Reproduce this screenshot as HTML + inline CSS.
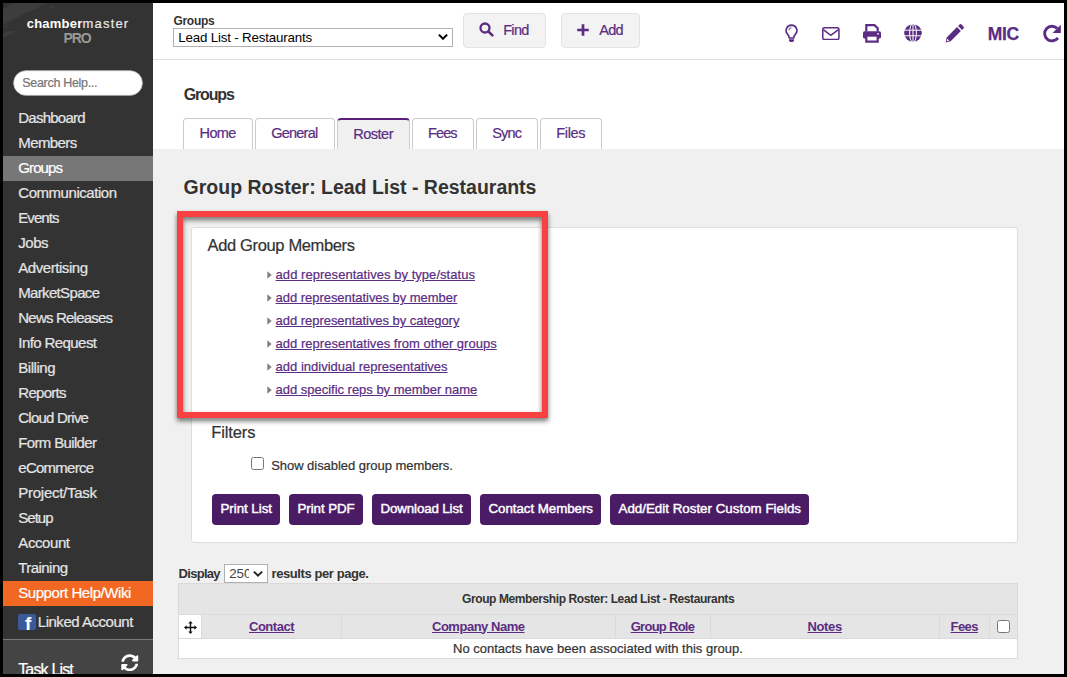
<!DOCTYPE html>
<html lang="en">
<head>
<meta charset="utf-8">
<title>Group Roster: Lead List - Restaurants</title>
<style>

html,body{margin:0;padding:0;}
body{width:1067px;height:677px;overflow:hidden;position:relative;background:#f0f0f0;font-family:"Liberation Sans",Arial,sans-serif;color:#333;}
.abs,.t,svg{position:absolute;}
.t{white-space:pre;margin:0;-webkit-text-stroke:.22px currentColor;}
.t.b{-webkit-text-stroke:0;}
a.t{text-decoration:underline;}
a.t.nu{text-decoration:none;}
#frame{left:0;top:0;width:1067px;height:677px;box-sizing:border-box;border:3px solid #000;z-index:50;}
#side{left:0;top:0;width:153px;height:677px;background:#333;}
#topbar{left:153px;top:0;width:914px;height:59px;background:#fff;border-bottom:1px solid #ddd;}
#white{left:153px;top:60px;width:914px;height:89px;background:#fff;}
.tab{top:118px;height:31px;box-sizing:border-box;background:#fff;border:1px solid #ccc;border-bottom:none;border-radius:4px 4px 0 0;}
.tab.on{background:#f0f0f0;border-top:2px solid #5a1f7c;}
.btn{top:494px;height:31px;background:#4a1c66;border-radius:4px;}
.tbtn{top:13px;height:35px;box-sizing:border-box;background:#f3f3f3;border:1px solid #e3e3e3;border-radius:4px;}
#panel{left:191px;top:227px;width:827px;height:316px;box-sizing:border-box;background:#fff;border:1px solid #ddd;border-radius:3px;}
#hl{left:177px;top:211px;width:371px;height:207px;box-sizing:border-box;border:6px solid #fa4141;filter:drop-shadow(.5px 3px 2.400px rgba(0,0,0,.55));z-index:10;}
.cb{width:13px;height:13px;box-sizing:border-box;border:1px solid #767676;border-radius:2.5px;background:#fff;}
.sel{box-sizing:border-box;border:1px solid #b0b0b0;background:#fff;}

</style>
</head>
<body>
<div id="side" class="abs">
<svg style="left:3px;top:3px" width="110" height="70" viewBox="3 3 110 70"><g fill="#3d3d3d"><polygon points="3,9 13,3 46,3 36,9 24,14 12,20 3,25"/><polygon points="3,33 9,31 14,31 13,33.500 3,37.500"/><polygon points="51,6 53.500,5 54,7.500 52,9.500"/><polygon points="3,26.500 10,24.500 3,28.500"/></g></svg>
<span class="t b" style="left:26.7px;top:16.0px;font-size:13px;line-height:16px;font-weight:700;color:#fff;letter-spacing:0.23px;">chamber</span>
<span class="t" style="left:82.6px;top:16.0px;font-size:13px;line-height:16px;font-weight:400;color:#e8e8e8;letter-spacing:1.17px;">master</span>
<span class="t b" style="left:63.5px;top:29.8px;font-size:14px;line-height:17px;font-weight:700;color:#999;letter-spacing:-1.12px;">PRO</span>
<svg style="left:10px;top:68px" width="136" height="30" viewBox="10 68 136 30"><rect x="13.600" y="70.700" width="128.800" height="24.600" rx="12.300" fill="#fff" stroke="#c0c0c0" stroke-width=".8"/></svg>
<span class="t" style="left:22.3px;top:75.8px;font-size:12.5px;line-height:15px;font-weight:400;color:#757575;letter-spacing:-0.31px;">Search Help...</span>
<a class="t nu" style="left:18.3px;top:108.8px;font-size:15px;line-height:18px;font-weight:400;color:#e4e4e4;letter-spacing:-0.77px;">Dashboard</a>
<a class="t nu" style="left:18.3px;top:133.8px;font-size:15px;line-height:18px;font-weight:400;color:#e4e4e4;letter-spacing:-0.60px;">Members</a>
<div class="abs" style="left:0;top:156px;width:153px;height:25px;background:#777;"></div>
<a class="t nu" style="left:18.3px;top:158.8px;font-size:15px;line-height:18px;font-weight:400;color:#fff;letter-spacing:-0.90px;">Groups</a>
<a class="t nu" style="left:18.3px;top:183.8px;font-size:15px;line-height:18px;font-weight:400;color:#e4e4e4;letter-spacing:-0.46px;">Communication</a>
<a class="t nu" style="left:18.3px;top:208.8px;font-size:15px;line-height:18px;font-weight:400;color:#e4e4e4;letter-spacing:-0.93px;">Events</a>
<a class="t nu" style="left:18.3px;top:233.8px;font-size:15px;line-height:18px;font-weight:400;color:#e4e4e4;letter-spacing:-0.50px;">Jobs</a>
<a class="t nu" style="left:18.3px;top:258.8px;font-size:15px;line-height:18px;font-weight:400;color:#e4e4e4;letter-spacing:-0.45px;">Advertising</a>
<a class="t nu" style="left:18.3px;top:283.8px;font-size:15px;line-height:18px;font-weight:400;color:#e4e4e4;letter-spacing:-0.67px;">MarketSpace</a>
<a class="t nu" style="left:18.3px;top:308.8px;font-size:15px;line-height:18px;font-weight:400;color:#e4e4e4;letter-spacing:-0.79px;">News Releases</a>
<a class="t nu" style="left:18.3px;top:333.8px;font-size:15px;line-height:18px;font-weight:400;color:#e4e4e4;letter-spacing:-0.58px;">Info Request</a>
<a class="t nu" style="left:18.3px;top:358.8px;font-size:15px;line-height:18px;font-weight:400;color:#e4e4e4;letter-spacing:-0.47px;">Billing</a>
<a class="t nu" style="left:18.3px;top:383.8px;font-size:15px;line-height:18px;font-weight:400;color:#e4e4e4;letter-spacing:-0.72px;">Reports</a>
<a class="t nu" style="left:18.3px;top:408.8px;font-size:15px;line-height:18px;font-weight:400;color:#e4e4e4;letter-spacing:-0.77px;">Cloud Drive</a>
<a class="t nu" style="left:18.3px;top:433.8px;font-size:15px;line-height:18px;font-weight:400;color:#e4e4e4;letter-spacing:-0.65px;">Form Builder</a>
<a class="t nu" style="left:18.3px;top:458.8px;font-size:15px;line-height:18px;font-weight:400;color:#e4e4e4;letter-spacing:-0.75px;">eCommerce</a>
<a class="t nu" style="left:18.3px;top:483.8px;font-size:15px;line-height:18px;font-weight:400;color:#e4e4e4;letter-spacing:-0.27px;">Project/Task</a>
<a class="t nu" style="left:18.3px;top:508.8px;font-size:15px;line-height:18px;font-weight:400;color:#e4e4e4;letter-spacing:-1.00px;">Setup</a>
<a class="t nu" style="left:18.3px;top:533.8px;font-size:15px;line-height:18px;font-weight:400;color:#e4e4e4;letter-spacing:-0.42px;">Account</a>
<a class="t nu" style="left:18.3px;top:558.8px;font-size:15px;line-height:18px;font-weight:400;color:#e4e4e4;letter-spacing:-0.56px;">Training</a>
<div class="abs" style="left:0;top:581px;width:153px;height:25px;background:#f26722;"></div>
<a class="t nu" style="left:18.2px;top:583.5px;font-size:15px;line-height:18px;font-weight:400;color:#fff;letter-spacing:-0.43px;">Support Help/Wiki</a>
<div class="abs" style="left:18px;top:614px;width:18px;height:16px;border-radius:2px;background:#3b5998;overflow:hidden;"><span class="abs" style="left:7px;top:.3px;font-size:19px;line-height:19px;font-weight:700;color:#fff;">f</span></div>
<a class="t nu" style="left:37.8px;top:612.8px;font-size:15px;line-height:18px;font-weight:400;color:#e4e4e4;letter-spacing:-0.48px;">Linked Account</a>
<div class="abs" style="left:0;top:639px;width:153px;height:38px;background:#444;border-top:1px solid #7a7a7a;box-sizing:border-box;"></div>
<span class="t" style="left:18.2px;top:660.3px;font-size:16px;line-height:19px;font-weight:400;color:#fff;letter-spacing:-0.83px;">Task List</span>
<svg style="left:121.300px;top:653.800px" width="17.500" height="17.500" viewBox="0 0 512 512"><path fill="#fff" d="M370.7 133.3C339.5 104 298.900 88 255.800 88c-77.500 .1-144.300 53.200-162.800 126.900-1.300 5.400-6.100 9.200-11.700 9.200H24.100c-7.500 0-13.200-6.800-11.800-14.200C33.900 94.900 134.800 8 256 8c66.400 0 126.800 26.100 171.300 68.700L463 41C478.100 25.900 504 36.600 504 57.900V192c0 13.300-10.700 24-24 24H345.900c-21.400 0-32.100-25.900-17-41l41.800-41.700zM32 296h134.100c21.400 0 32.100 25.900 17 41l-41.800 41.800c31.300 29.300 71.800 45.300 114.900 45.300 77.400-.1 144.300-53.100 162.800-126.800 1.300-5.400 6.100-9.200 11.700-9.200h57.300c7.500 0 13.200 6.800 11.800 14.200C478.100 417.100 377.200 504 256 504c-66.400 0-126.800-26.100-171.300-68.700L49 471c-15.100 15.100-41 4.400-41-16.900V320c0-13.300 10.700-24 24-24z"/></svg>
</div>
<div id="topbar" class="abs"></div>
<span class="t b" style="left:173.4px;top:13.5px;font-size:12px;line-height:14px;font-weight:700;color:#333;letter-spacing:-0.27px;">Groups</span>
<div class="abs sel" style="left:173px;top:28px;width:280px;height:19px;"></div>
<span class="t b" style="left:178.2px;top:30.1px;font-size:13.33px;line-height:16px;font-weight:400;color:#000;letter-spacing:-0.17px;">Lead List - Restaurants</span>
<svg style="left:438px;top:33px" width="10" height="8" viewBox="0 0 10 8"><path d="M.9 1.600 5 5.800 9.100 1.600" fill="none" stroke="#000" stroke-width="2"/></svg>
<div class="abs tbtn" style="left:463px;width:83px;"></div>
<svg style="left:478.5px;top:22.300px" width="15" height="15" viewBox="0 0 15 15"><circle cx="6" cy="6" r="4.500" fill="none" stroke="#5b2d82" stroke-width="2.300"/><path d="M9.300 9.300 13.400 13.400" stroke="#5b2d82" stroke-width="2.600" stroke-linecap="round"/></svg>
<span class="t" style="left:503.2px;top:21.7px;font-size:14.5px;line-height:17px;font-weight:400;color:#5b2d82;letter-spacing:-0.67px;">Find</span>
<div class="abs tbtn" style="left:561px;width:79px;"></div>
<svg style="left:577px;top:24px" width="12" height="12" viewBox="0 0 12 12"><path d="M6 .2v11.600M.2 6h11.600" stroke="#5b2d82" stroke-width="2.700"/></svg>
<span class="t" style="left:599.2px;top:21.7px;font-size:14.5px;line-height:17px;font-weight:400;color:#5b2d82;letter-spacing:-0.71px;">Add</span>
<svg style="left:785px;top:23.500px" width="13" height="19" viewBox="0 0 13 19"><path d="M6.500 1.100a5.400 5.400 0 0 0-4 9c.9 1 1.600 2.300 1.800 3.900h4.400c.2-1.600.9-2.900 1.800-3.900a5.400 5.400 0 0 0-4-9z" fill="none" stroke="#5b2d82" stroke-width="1.600"/><path d="M4 15.300h5v1.200l-1 1.600H5l-1-1.600z" fill="#5b2d82"/><path d="M3.900 6.400a2.600 2.600 0 0 1 2.600-2.600" fill="none" stroke="#5b2d82" stroke-width=".9"/></svg>
<svg style="left:821.800px;top:26.600px" width="18" height="13.200" viewBox="0 0 18 13.200"><rect x=".75" y=".75" width="16.200" height="11.700" rx="1.500" fill="none" stroke="#5b2d82" stroke-width="1.500"/><path d="M1.300 2.600 8.850 8.300 16.400 2.600" fill="none" stroke="#5b2d82" stroke-width="1.500"/></svg>
<svg style="left:863px;top:23.500px" width="18" height="19" viewBox="0 0 18 19"><path d="M3.300 7.500V1.200h8.200l3.200 3v3.300" fill="none" stroke="#5b2d82" stroke-width="2.200"/><rect x="0" y="7.300" width="18" height="7.200" rx="1.600" fill="#5b2d82"/><rect x="3.300" y="11.600" width="11.400" height="6" fill="#fff" stroke="#5b2d82" stroke-width="2.200"/><circle cx="15" cy="9.800" r=".9" fill="#fff"/></svg>
<svg style="left:904px;top:24px" width="18" height="18" viewBox="0 0 18 18"><circle cx="9" cy="9" r="8.800" fill="#5b2d82"/><g fill="none" stroke="#fff" stroke-width="1"><ellipse cx="9" cy="9" rx="3.400" ry="9.600"/><path d="M0 6.200h18M0 11.800h18M9 0v18"/></g></svg>
<svg style="left:945px;top:23.500px" width="19" height="19" viewBox="0 0 19 19"><path d="M.6 18.400 1.700 13.400 12 3.100 15.900 7 5.600 17.300z" fill="#5b2d82"/><path d="M13.100 2 14.500 .6a1.500 1.500 0 0 1 2.100 0l1.800 1.800a1.500 1.500 0 0 1 0 2.100L17 5.900z" fill="#5b2d82"/><path d="M2.300 14.800 4.200 16.700 1.700 17.300z" fill="#fff"/></svg>
<span class="t b" style="left:987.8px;top:24.1px;font-size:17.5px;line-height:21px;font-weight:700;color:#5b2d82;letter-spacing:-0.39px;-webkit-text-stroke:.25px #5b2d82;">MIC</span>
<svg style="left:1042px;top:23.500px" width="20" height="19" viewBox="0 0 20 19"><path d="M15.900 13.800a7.300 7.300 0 1 1-.8-9.400" fill="none" stroke="#5b2d82" stroke-width="2.900"/><path d="M18.800 .8v8.200h-8.200z" fill="#5b2d82"/></svg>
<div id="white" class="abs"></div>
<span class="t b" style="left:183.7px;top:84.8px;font-size:16px;line-height:19px;font-weight:700;color:#333;letter-spacing:-1.16px;">Groups</span>
<div class="abs tab" style="left:183px;width:69.5px;"></div>
<a class="t nu" style="left:199.6px;top:124.5px;font-size:14.5px;line-height:17px;font-weight:400;color:#5b2d82;letter-spacing:-0.66px;">Home</a>
<div class="abs tab" style="left:255px;width:80px;"></div>
<a class="t nu" style="left:271.2px;top:124.5px;font-size:14.5px;line-height:17px;font-weight:400;color:#5b2d82;letter-spacing:-0.77px;">General</a>
<div class="abs tab on" style="left:337px;width:73px;"></div>
<a class="t nu" style="left:353.3px;top:125.5px;font-size:14.5px;line-height:17px;font-weight:400;color:#5b2d82;letter-spacing:-0.50px;">Roster</a>
<div class="abs tab" style="left:412px;width:62px;"></div>
<a class="t nu" style="left:428.1px;top:124.5px;font-size:14.5px;line-height:17px;font-weight:400;color:#5b2d82;letter-spacing:-0.92px;">Fees</a>
<div class="abs tab" style="left:476px;width:61.5px;"></div>
<a class="t nu" style="left:492.2px;top:124.5px;font-size:14.5px;line-height:17px;font-weight:400;color:#5b2d82;letter-spacing:-0.82px;">Sync</a>
<div class="abs tab" style="left:540px;width:61.5px;"></div>
<a class="t nu" style="left:556.3px;top:124.5px;font-size:14.5px;line-height:17px;font-weight:400;color:#5b2d82;letter-spacing:-0.36px;">Files</a>
<h1 class="t b" style="left:183.6px;top:176.0px;font-size:19.5px;line-height:23px;font-weight:700;color:#333;letter-spacing:-0.01px;">Group Roster: Lead List - Restaurants</h1>
<div id="panel" class="abs"></div>
<h3 class="t" style="left:207.6px;top:234.9px;font-size:16.5px;line-height:20px;font-weight:400;color:#333;letter-spacing:-0.36px;">Add Group Members</h3>
<svg style="left:266.500px;top:270.8px" width="5" height="8" viewBox="0 0 5 8"><path d="M.3 .3 4.700 4 .3 7.700z" fill="#808080"/></svg>
<a class="t" style="left:275.6px;top:267.1px;font-size:13px;line-height:16px;font-weight:400;color:#5b2d82;letter-spacing:0.04px;">add representatives by type/status</a>
<svg style="left:266.500px;top:293.8px" width="5" height="8" viewBox="0 0 5 8"><path d="M.3 .3 4.700 4 .3 7.700z" fill="#808080"/></svg>
<a class="t" style="left:275.6px;top:290.1px;font-size:13px;line-height:16px;font-weight:400;color:#5b2d82;letter-spacing:-0.04px;">add representatives by member</a>
<svg style="left:266.500px;top:316.8px" width="5" height="8" viewBox="0 0 5 8"><path d="M.3 .3 4.700 4 .3 7.700z" fill="#808080"/></svg>
<a class="t" style="left:275.6px;top:313.1px;font-size:13px;line-height:16px;font-weight:400;color:#5b2d82;letter-spacing:-0.04px;">add representatives by category</a>
<svg style="left:266.500px;top:339.8px" width="5" height="8" viewBox="0 0 5 8"><path d="M.3 .3 4.700 4 .3 7.700z" fill="#808080"/></svg>
<a class="t" style="left:275.6px;top:336.1px;font-size:13px;line-height:16px;font-weight:400;color:#5b2d82;letter-spacing:0.02px;">add representatives from other groups</a>
<svg style="left:266.500px;top:362.8px" width="5" height="8" viewBox="0 0 5 8"><path d="M.3 .3 4.700 4 .3 7.700z" fill="#808080"/></svg>
<a class="t" style="left:275.6px;top:359.1px;font-size:13px;line-height:16px;font-weight:400;color:#5b2d82;">add individual representatives</a>
<svg style="left:266.500px;top:385.8px" width="5" height="8" viewBox="0 0 5 8"><path d="M.3 .3 4.700 4 .3 7.700z" fill="#808080"/></svg>
<a class="t" style="left:275.6px;top:382.1px;font-size:13px;line-height:16px;font-weight:400;color:#5b2d82;letter-spacing:-0.02px;">add specific reps by member name</a>
<h3 class="t" style="left:211.2px;top:422.4px;font-size:16.5px;line-height:20px;font-weight:400;color:#333;letter-spacing:-0.10px;">Filters</h3>
<div class="abs cb" style="left:251px;top:457px;"></div>
<span class="t" style="left:271.2px;top:457.5px;font-size:13px;line-height:16px;font-weight:400;color:#333;letter-spacing:-0.04px;">Show disabled group members.</span>
<div class="abs btn" style="left:212px;width:68px;"></div>
<span class="t" style="left:220.5px;top:501.4px;font-size:13.33px;line-height:16px;font-weight:400;color:#fff;letter-spacing:-0.04px;-webkit-text-stroke:.42px #fff;">Print List</span>
<div class="abs btn" style="left:289px;width:73.69999999999999px;"></div>
<span class="t" style="left:297.5px;top:501.4px;font-size:13.33px;line-height:16px;font-weight:400;color:#fff;letter-spacing:-0.07px;-webkit-text-stroke:.42px #fff;">Print PDF</span>
<div class="abs btn" style="left:372px;width:98.69999999999999px;"></div>
<span class="t" style="left:380.5px;top:501.4px;font-size:13.33px;line-height:16px;font-weight:400;color:#fff;letter-spacing:-0.13px;-webkit-text-stroke:.42px #fff;">Download List</span>
<div class="abs btn" style="left:480px;width:121px;"></div>
<span class="t" style="left:488.5px;top:501.4px;font-size:13.33px;line-height:16px;font-weight:400;color:#fff;letter-spacing:-0.05px;-webkit-text-stroke:.42px #fff;">Contact Members</span>
<div class="abs btn" style="left:610px;width:199px;"></div>
<span class="t" style="left:618.5px;top:501.4px;font-size:13.33px;line-height:16px;font-weight:400;color:#fff;letter-spacing:0.01px;-webkit-text-stroke:.42px #fff;">Add/Edit Roster Custom Fields</span>
<div id="hl" class="abs"></div>
<span class="t b" style="left:178.6px;top:565.8px;font-size:13px;line-height:16px;font-weight:700;color:#333;letter-spacing:-0.72px;">Display</span>
<div class="abs sel" style="left:224px;top:564px;width:44px;height:19px;border-color:#b0b0b0;overflow:hidden;"></div>
<span class="t b" style="left:229.3px;top:566.2px;font-size:13.33px;line-height:16px;font-weight:400;color:#444;letter-spacing:-0.12px;width:19.500px;overflow:hidden;">250</span>
<svg style="left:252.800px;top:569.500px" width="10" height="8" viewBox="0 0 10 8"><path d="M.9 1.600 5 5.700 9.100 1.600" fill="none" stroke="#222" stroke-width="1.900"/></svg>
<span class="t b" style="left:271.6px;top:565.8px;font-size:13px;line-height:16px;font-weight:700;color:#333;letter-spacing:-0.42px;">results per page.</span>
<div class="abs" style="left:178px;top:583px;width:840px;height:76px;box-sizing:border-box;border:1px solid #dadada;background:#fff;"></div>
<div class="abs" style="left:179px;top:584px;width:838px;height:30px;background:#e5e5e5;"></div>
<span class="t b" style="left:462.0px;top:592.1px;font-size:12px;line-height:14px;font-weight:700;color:#333;letter-spacing:-0.40px;">Group Membership Roster: Lead List - Restaurants</span>
<div class="abs" style="left:179px;top:614px;width:838px;height:1px;background:#dadada;"></div>
<div class="abs" style="left:202px;top:615px;width:815px;height:23px;background:#e5e5e5;"></div>
<div class="abs" style="left:179px;top:638px;width:838px;height:1px;background:#dadada;"></div>
<div class="abs" style="left:201px;top:615px;width:1px;height:23px;background:#dadada;"></div>
<div class="abs" style="left:341px;top:615px;width:1px;height:23px;background:#dadada;"></div>
<div class="abs" style="left:615px;top:615px;width:1px;height:23px;background:#dadada;"></div>
<div class="abs" style="left:710px;top:615px;width:1px;height:23px;background:#dadada;"></div>
<div class="abs" style="left:939px;top:615px;width:1px;height:23px;background:#dadada;"></div>
<div class="abs" style="left:989px;top:615px;width:1px;height:23px;background:#dadada;"></div>
<svg style="left:184px;top:621px" width="13" height="13" viewBox="0 0 13 13"><path d="M6.500 0 8.700 2.600H7.200v3.200h3.200V4.300L13 6.500 10.400 8.700V7.200H7.200v3.200h1.500L6.500 13 4.300 10.400h1.500V7.200H2.600v1.500L0 6.500 2.600 4.300v1.500h3.200V2.600H4.300z" fill="#111"/></svg>
<a class="t b" style="left:249.0px;top:618.5px;font-size:13px;line-height:16px;font-weight:700;color:#5b2d82;letter-spacing:-0.48px;">Contact</a>
<a class="t b" style="left:432.0px;top:618.5px;font-size:13px;line-height:16px;font-weight:700;color:#5b2d82;letter-spacing:-0.48px;">Company Name</a>
<a class="t b" style="left:630.7px;top:618.5px;font-size:13px;line-height:16px;font-weight:700;color:#5b2d82;letter-spacing:-0.72px;">Group Role</a>
<a class="t b" style="left:807.5px;top:618.5px;font-size:13px;line-height:16px;font-weight:700;color:#5b2d82;letter-spacing:-0.36px;">Notes</a>
<a class="t b" style="left:950.5px;top:618.5px;font-size:13px;line-height:16px;font-weight:700;color:#5b2d82;letter-spacing:-0.55px;">Fees</a>
<div class="abs cb" style="left:997px;top:620px;"></div>
<span class="t" style="left:453.0px;top:640.8px;font-size:13px;line-height:16px;font-weight:400;color:#333;">No contacts have been associated with this group.</span>
<div id="frame" class="abs"></div>
</body>
</html>
